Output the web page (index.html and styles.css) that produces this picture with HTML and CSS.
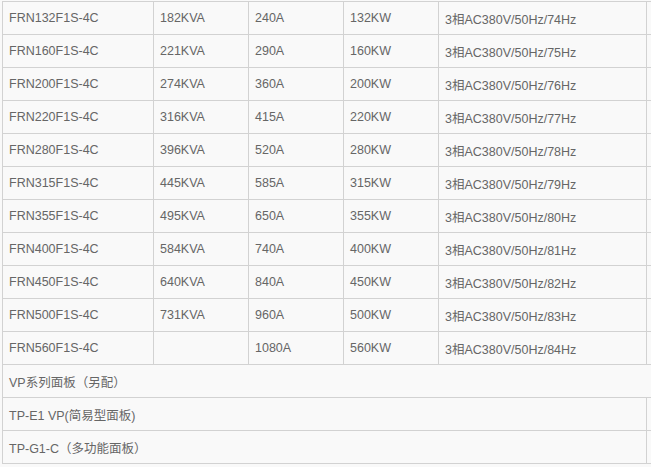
FILE: index.html
```html
<!DOCTYPE html>
<html>
<head>
<meta charset="utf-8">
<link rel="stylesheet" href="styles.css">
</head>
<body>
<div class="wrap">
<table class="spec">
<colgroup>
<col class="c1"><col class="c2"><col class="c3"><col class="c4"><col class="c5"><col class="c6">
</colgroup>
<tbody>
<tr><td>FRN132F1S-4C</td><td>182KVA</td><td>240A</td><td>132KW</td><td>3相AC380V/50Hz/74Hz</td><td></td></tr>
<tr><td>FRN160F1S-4C</td><td>221KVA</td><td>290A</td><td>160KW</td><td>3相AC380V/50Hz/75Hz</td><td></td></tr>
<tr><td>FRN200F1S-4C</td><td>274KVA</td><td>360A</td><td>200KW</td><td>3相AC380V/50Hz/76Hz</td><td></td></tr>
<tr><td>FRN220F1S-4C</td><td>316KVA</td><td>415A</td><td>220KW</td><td>3相AC380V/50Hz/77Hz</td><td></td></tr>
<tr><td>FRN280F1S-4C</td><td>396KVA</td><td>520A</td><td>280KW</td><td>3相AC380V/50Hz/78Hz</td><td></td></tr>
<tr><td>FRN315F1S-4C</td><td>445KVA</td><td>585A</td><td>315KW</td><td>3相AC380V/50Hz/79Hz</td><td></td></tr>
<tr><td>FRN355F1S-4C</td><td>495KVA</td><td>650A</td><td>355KW</td><td>3相AC380V/50Hz/80Hz</td><td></td></tr>
<tr><td>FRN400F1S-4C</td><td>584KVA</td><td>740A</td><td>400KW</td><td>3相AC380V/50Hz/81Hz</td><td></td></tr>
<tr><td>FRN450F1S-4C</td><td>640KVA</td><td>840A</td><td>450KW</td><td>3相AC380V/50Hz/82Hz</td><td></td></tr>
<tr><td>FRN500F1S-4C</td><td>731KVA</td><td>960A</td><td>500KW</td><td>3相AC380V/50Hz/83Hz</td><td></td></tr>
<tr><td>FRN560F1S-4C</td><td></td><td>1080A</td><td>560KW</td><td>3相AC380V/50Hz/84Hz</td><td></td></tr>
<tr><td colspan="6">VP系列面板（另配）</td></tr>
<tr><td colspan="5">TP-E1 VP(简易型面板)</td><td></td></tr>
<tr><td colspan="5">TP-G1-C（多功能面板）</td><td></td></tr>
</tbody>
</table>
</div>
</body>
</html>
```
FILE: styles.css
```css
html, body {
  margin: 0;
  padding: 0;
  overflow: hidden;
  background: #f9f9f9;
}
.wrap {
  width: 651px;
  height: 467px;
  overflow: hidden;
  padding: 1px 0 0 2px;
  box-sizing: border-box;
}
.spec {
  border-collapse: collapse;
  table-layout: fixed;
  width: 795px;
  font-family: Arial, "Liberation Sans", "Noto Sans CJK SC", sans-serif;
  font-size: 12.5px;
  color: #666;
}
.c1 { width: 151px; }
.c2 { width: 95px; }
.c3 { width: 95px; }
.c4 { width: 95px; }
.c5 { width: 208px; }
.c6 { width: 151px; }
.spec td {
  border: 1px solid #d2d2d2;
  height: 32px;
  padding: 0 6px;
  box-sizing: border-box;
  vertical-align: middle;
  white-space: nowrap;
}
.spec tr {
  height: 33px;
}
```
